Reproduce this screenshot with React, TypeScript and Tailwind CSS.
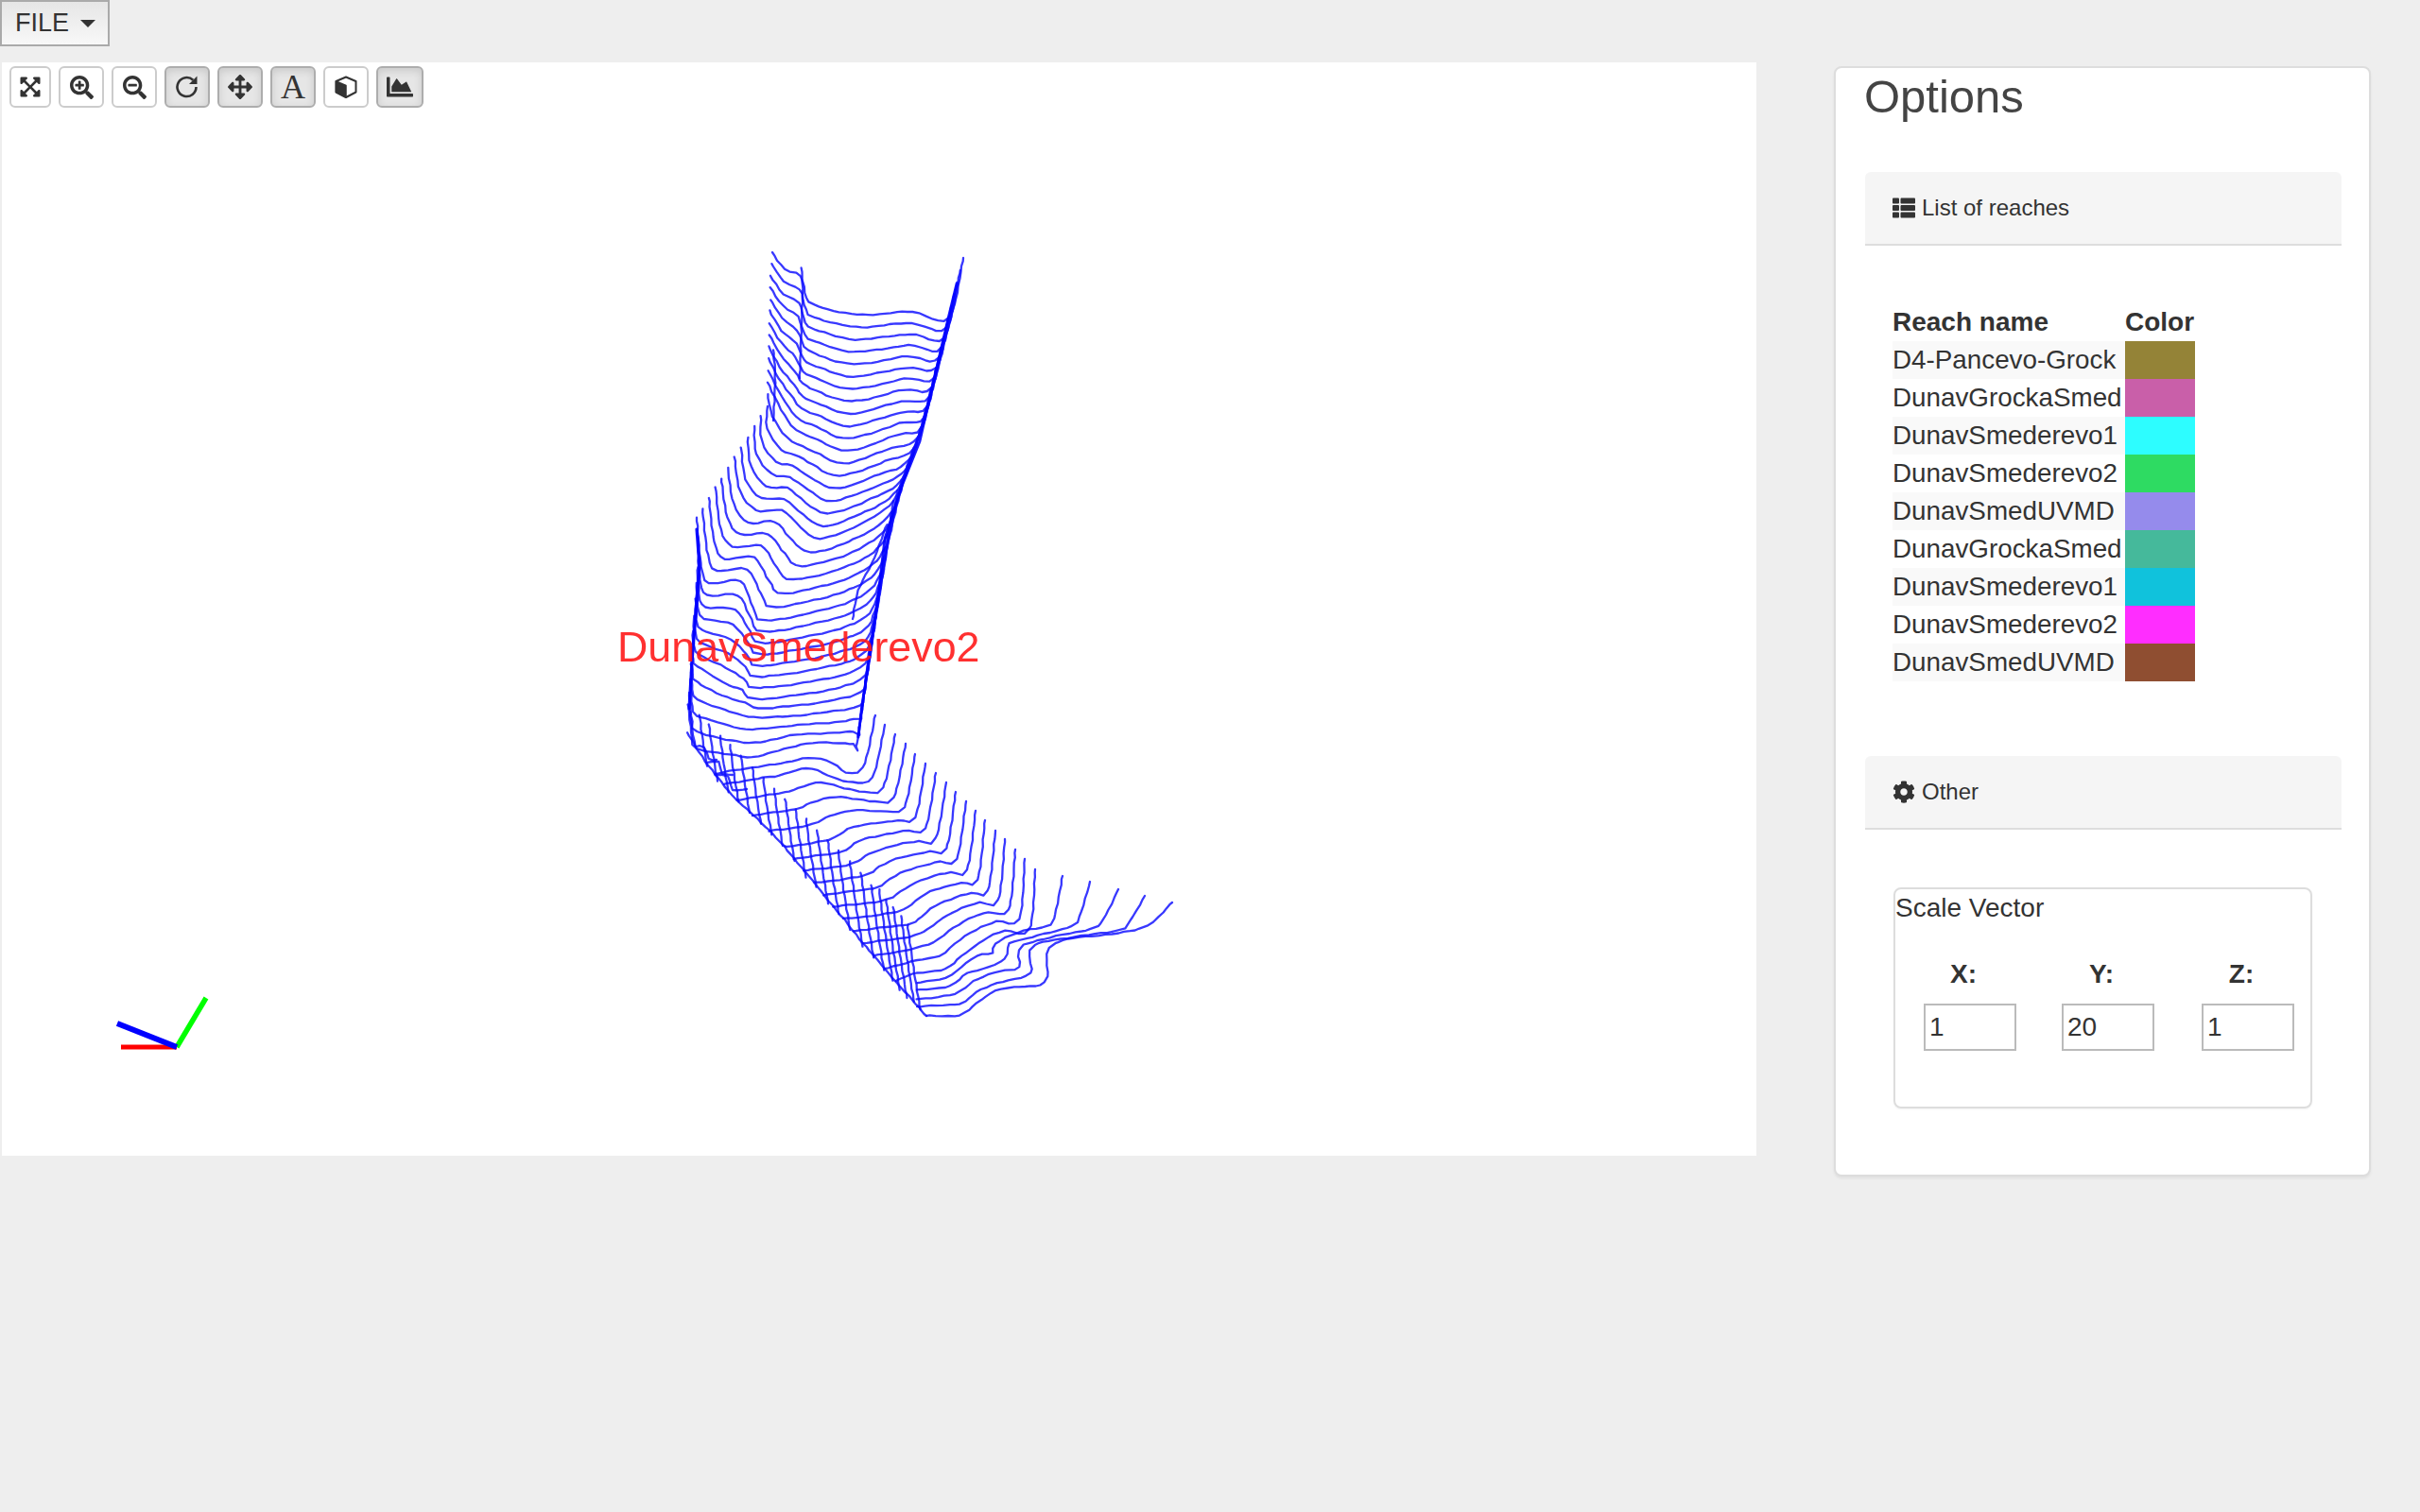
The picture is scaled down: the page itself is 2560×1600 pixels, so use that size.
import React from "react";
import { FaExpandArrowsAlt, FaSearchPlus, FaSearchMinus, FaArrowsAlt, FaChartArea, FaThList, FaCog } from "react-icons/fa";

type P = [number, number];

const lerp = (a: P, b: P, t: number): P => [a[0] + (b[0] - a[0]) * t, a[1] + (b[1] - a[1]) * t];

function interpKeys(keys: Record<number, P[]>, k: number): P[] {
  const ids = Object.keys(keys).map(Number).sort((a, b) => a - b);
  for (let i = 0; i < ids.length - 1; i++) {
    if (k >= ids[i] && k <= ids[i + 1]) {
      const t = (k - ids[i]) / (ids[i + 1] - ids[i]);
      return keys[ids[i]].map((p, n) => lerp(p, keys[ids[i + 1]][n], t));
    }
  }
  return keys[ids[ids.length - 1]];
}

function noisyPath(pts: P[], seed: number): string {
  const out: P[] = [];
  const n = pts.length;
  for (let i = 0; i < n - 1; i++) {
    const p0 = pts[Math.max(i - 1, 0)];
    const p1 = pts[i];
    const p2 = pts[i + 1];
    const p3 = pts[Math.min(i + 2, n - 1)];
    const len = Math.hypot(p2[0] - p1[0], p2[1] - p1[1]);
    const steps = Math.max(2, Math.round(len / 6));
    for (let s = 0; s < steps; s++) {
      const t = s / steps;
      const t2 = t * t;
      const t3 = t2 * t;
      const f = (a: number, b: number, c: number, d: number) =>
        0.5 * (2 * b + (c - a) * t + (2 * a - 5 * b + 4 * c - d) * t2 + (3 * b - a - 3 * c + d) * t3);
      const q = out.length;
      const jx = 0.45 * Math.sin(q * 2.3 + seed * 1.7);
      const jy = 0.7 * Math.sin(q * 1.37 + seed * 2.9) * Math.sin(q * 0.61 + seed);
      out.push([f(p0[0], p1[0], p2[0], p3[0]) + jx, f(p0[1], p1[1], p2[1], p3[1]) + jy]);
    }
  }
  out.push(pts[n - 1]);
  return "M" + out.map((p) => `${p[0].toFixed(1)} ${p[1].toFixed(1)}`).join("L");
}

const leftTips: P[] = [
  [817, 267], [816, 279], [815, 292], [815, 304], [815, 317], [814, 329], [814, 342], [814, 354],
  [813, 367], [813, 379], [813, 392], [812, 405], [812, 417], [812, 430],
  [805, 440], [798, 451], [791, 463], [784, 473], [777, 484], [770, 495], [763, 506], [757, 516], [750, 527], [743, 538], [737, 548],
  [738, 565], [739, 583], [738, 600], [737, 617], [736, 634], [734, 651], [733, 668], [732, 685], [731, 702], [730, 719], [729, 733], [728, 745],
];

const upperKeys: Record<number, P[]> = {
  0: [[817, 267], [830, 285], [847, 292], [853, 315], [862, 323], [907, 333], [965, 330], [1003, 337]],
  11: [[813, 392], [823, 427], [837, 450], [847, 458], [865, 465], [897, 477], [950, 460], [975, 452]],
  18: [[777, 484], [783, 520], [800, 540], [827, 540], [847, 558], [867, 570], [903, 558], [945, 530]],
  24: [[737, 548], [742, 600], [750, 617], [783, 615], [797, 643], [812, 657], [903, 635], [933, 603]],
  31: [[732, 685], [733, 697], [738, 705], [765, 722], [785, 730], [803, 740], [903, 723], [920, 690]],
  36: [[728, 745], [732, 780], [737, 792], [783, 800], [803, 800], [853, 787], [903, 787], [906, 790]],
};

const lowerKeys: Record<number, P[]> = {
  37: [[796, 812], [826, 808], [855, 802], [880, 807], [895, 817], [913, 812]],
  38: [[807, 823], [820, 822], [853, 813], [880, 822], [902, 828], [923, 822]],
  42: [[876, 889], [897, 877], [915, 873], [933, 870], [950, 868], [968, 865]],
  49: [[960, 978], [975, 970], [990, 958], [1010, 950], [1028, 945], [1045, 942]],
  53: [[965, 1031], [1000, 1025], [1017, 1012], [1040, 995], [1063, 985], [1089, 983]],
};

const diagonal: P[] = [[727, 775], [737, 792], [757, 820], [780, 847], [827, 893], [923, 1010], [980, 1075]];

function diagX(y: number): number {
  for (let i = 0; i < diagonal.length - 1; i++) {
    const a = diagonal[i];
    const b = diagonal[i + 1];
    if (y >= a[1] && y <= b[1]) return a[0] + ((b[0] - a[0]) * (y - a[1])) / (b[1] - a[1]);
  }
  return 0;
}

const hatchTipsZ: P[] = [
  [30, -20], [60, -10], [90, 20],
  [125, 55], [157, 85], [192, 120], [228, 155], [262, 190], [297, 225], [332, 255], [365, 290], [398, 320], [433, 355],
  [467, 388], [500, 420], [537, 455], [572, 490], [605, 530], [630, 545], [652, 575], [675, 600], [700, 630], [720, 655],
];
const hatchTips: P[] = hatchTipsZ.map((p) => [720 + p[0] / 3, 760 + p[1] / 3]);

const rightTips: P[] = [
  [926, 757], [936, 767], [947, 777], [958, 787], [968, 798], [979, 808], [990, 818], [1001, 828], [1011, 838],
  [1022, 848], [1032, 858], [1042, 868], [1053, 879], [1063, 888], [1074, 899], [1084, 909], [1095, 920],
];

const finalRows: P[][] = [
  [[970, 1040], [1000, 1035], [1017, 1023], [1033, 1012], [1050, 1008], [1053, 998], [1083, 985], [1107, 980], [1115, 972], [1124, 927]],
  [[970, 1048], [1005, 1043], [1023, 1030], [1040, 1025], [1063, 1015], [1068, 998], [1087, 993], [1133, 980], [1142, 970], [1153, 933]],
  [[970, 1057], [1010, 1052], [1030, 1038], [1057, 1028], [1078, 1023], [1083, 1000], [1153, 983], [1167, 973], [1183, 941]],
  [[970, 1065], [1015, 1062], [1033, 1050], [1055, 1040], [1090, 1030], [1095, 1000], [1180, 985], [1195, 975], [1211, 948]],
  [[980, 1075], [1015, 1074], [1033, 1062], [1053, 1048], [1073, 1045], [1100, 1042], [1108, 1033], [1116, 998], [1205, 983], [1240, 955]],
];

const stairs: P[][] = [
  [[736, 790], [745, 791], [750, 803], [758, 804]],
  [[748, 807], [760, 806], [764, 818], [775, 820]],
  [[757, 820], [770, 821], [775, 836], [790, 835]],
];

function buildPaths(): string[] {
  const paths: string[] = [];
  const elbow = (k: number) => interpKeys(upperKeys, k)[7];
  for (let k = 0; k <= 36; k++) {
    const row = interpKeys(upperKeys, k).map((p) => [p[0], p[1]] as P);
    row[0] = leftTips[k];
    const rtip: P = k >= 5 ? elbow(k - 5) : lerp([1019, 273], elbow(0), k / 5);
    row.push(rtip);
    paths.push(noisyPath(row, k));
  }
  for (let k = 37; k <= 53; k++) {
    const row = interpKeys(lowerKeys, k).map((p) => [p[0], p[1]] as P);
    const y0 = row[0][1] + 7;
    const start: P = [diagX(y0), y0];
    const full: P[] = [start, ...row, rightTips[k - 37]];
    paths.push(noisyPath(full, k));
  }
  finalRows.forEach((r, i) => paths.push(noisyPath(r, 60 + i)));
  hatchTips.forEach((t, j) => {
    const pts: P[] = [t];
    let y = t[1];
    let x = t[0];
    while (y < 1075) {
      y += 6;
      x += 0.15 * 6;
      if (diagX(y) >= x) break;
    }
    pts.push([(t[0] + x) / 2 - 0.5, (t[1] + y) / 2]);
    pts.push([x, y]);
    paths.push(noisyPath(pts, 90 + j));
  });
  stairs.forEach((s, i) => paths.push(noisyPath(s, 130 + i)));
  paths.push(noisyPath(diagonal, 120));
  paths.push(noisyPath([[848, 284], [849, 305], [848, 340], [846, 400]], 121));
  paths.push(noisyPath([[818, 370], [820, 400], [818, 445]], 122));
  paths.push(noisyPath([[938, 555], [925, 590], [908, 625], [902, 655]], 123));
  return paths;
}

const meshPaths = buildPaths();

const reaches: [string, string][] = [
  ["D4-Pancevo-Grock", "bg-[#948337]"],
  ["DunavGrockaSmed", "bg-[#c95fa9]"],
  ["DunavSmederevo1", "bg-[#2dfdff]"],
  ["DunavSmederevo2", "bg-[#2edb62]"],
  ["DunavSmedUVMD", "bg-[#958bec]"],
  ["DunavGrockaSmed", "bg-[#45b99b]"],
  ["DunavSmederevo1", "bg-[#10c2dc]"],
  ["DunavSmederevo2", "bg-[#ff2dff]"],
  ["DunavSmedUVMD", "bg-[#8f4e31]"],
];

function ToolButton({ active, wide, narrow, children }: { active?: boolean; wide?: boolean; narrow?: boolean; children: React.ReactNode }) {
  return (
    <div
      className={
        "flex h-[44px] items-center justify-center rounded-[6px] border-2 text-[#333] " +
        (narrow ? "w-[44px] " : wide ? "w-[50px] " : "w-[48px] ") +
        (active
          ? "border-[#adadad] bg-[#e6e6e6] shadow-[inset_0_3px_8px_rgba(0,0,0,0.125)]"
          : "border-[#ccc] bg-white")
      }
    >
      {children}
    </div>
  );
}

function SectionHeader({ icon, title }: { icon: React.ReactNode; title: string }) {
  return (
    <div className="flex h-[78px] items-center gap-[7px] rounded-t-[6px] border-b-2 border-[#ddd] bg-[#f5f5f5] pl-[29px] text-[24px] text-[#333]">
      {icon}
      <span>{title}</span>
    </div>
  );
}

function VectorField({ label, value, width }: { label: string; value: string; width: string }) {
  return (
    <div className={width}>
      <div className="w-[84px] text-center text-[28px] leading-[40px] font-bold">{label}</div>
      <input
        readOnly
        value={value}
        className="mt-[11px] block h-[50px] w-[98px] border-2 border-[#bbb] bg-white pl-[4px] text-[28px] text-[#333] outline-none"
      />
    </div>
  );
}

export default function App() {
  return (
    <div className="min-h-[1600px] w-[2560px] overflow-hidden bg-[#eeeeee] font-['Liberation_Sans',Arial,sans-serif] text-[#333]">
      <button className="flex h-[49px] w-[116px] items-center border-2 border-[#aaa] bg-linear-to-b from-[#e6e6e6] to-[#f8f8f8] pl-[14px] text-[27px] text-[#333]">
        <span>FILE</span>
        <span className="ml-[12px] h-0 w-0 border-x-[8px] border-t-[8px] border-x-transparent border-t-[#333]" />
      </button>

      <div className="mt-[17px] flex items-start pl-[2px]">
        <div className="relative h-[1157px] w-[1856px] bg-white">
          <svg className="absolute inset-0 h-full w-full blur-[0.5px]" viewBox="2 66 1856 1157">
            <g fill="none" stroke="#0c0cff" strokeWidth="2.3" strokeOpacity="0.82" strokeLinejoin="round" strokeLinecap="round">
              {meshPaths.map((d, i) => (
                <path key={i} d={d} />
              ))}
            </g>
            <g fill="none" stroke="#0000ff" strokeLinejoin="round" strokeLinecap="round" strokeOpacity="0.9">
              <path d="M1012 300L1003 337L986 410L973 467L953 517" strokeWidth="2.8" />
              <path d="M953 517L936 570L929 630L921 690L912 745L908 780" strokeWidth="2.8" />
              <path d="M737 560L740 600L736 650L732 700L729 750" strokeWidth="3.2" />
            </g>
            <text x="653" y="700" fontSize="44.8" fill="#ff1a1a" fillOpacity="0.9">
              DunavSmederevo2
            </text>
            <g fill="none" strokeLinecap="butt">
              <line x1="128" y1="1108" x2="187" y2="1108" stroke="#ff0000" strokeWidth="5" />
              <line x1="218" y1="1056" x2="187" y2="1108" stroke="#00ff00" strokeWidth="5.5" />
              <line x1="124" y1="1083" x2="187" y2="1108" stroke="#0000ff" strokeWidth="6" />
            </g>
          </svg>
          <div className="absolute top-[4px] left-[8px] flex gap-[8px]">
            <ToolButton narrow>
              <FaExpandArrowsAlt size={24} />
            </ToolButton>
            <ToolButton>
              <FaSearchPlus size={25} />
            </ToolButton>
            <ToolButton>
              <FaSearchMinus size={25} />
            </ToolButton>
            <ToolButton active>
              <svg width="26" height="26" viewBox="0 0 26 26" fill="none">
                <path d="M22.5 13a10 10 0 1 1-3.2-7.3" stroke="#333" strokeWidth="2.6" />
                <path d="M23.5 1.5v8.5h-8.5z" fill="#333" />
              </svg>
            </ToolButton>
            <ToolButton active>
              <FaArrowsAlt size={26} />
            </ToolButton>
            <ToolButton active>
              <span className="font-['Liberation_Serif',serif] text-[36px] leading-none">A</span>
            </ToolButton>
            <ToolButton>
              <svg width="24" height="24" viewBox="0 0 24 24">
                <path d="M12 1.5L22.5 6V17.5L12 23L1.5 17.5V6Z" fill="#fff" stroke="#333" strokeWidth="2" strokeLinejoin="round" />
                <path d="M1.5 6L12 10.5V23L1.5 17.5Z" fill="#333" stroke="#333" strokeWidth="1.5" strokeLinejoin="round" />
              </svg>
            </ToolButton>
            <ToolButton active wide>
              <FaChartArea size={28} />
            </ToolButton>
          </div>
        </div>

        <div className="mt-[4px] ml-[82px] h-[1175px] w-[568px] rounded-[8px] border-2 border-[#ddd] bg-white pr-[29px] pl-[31px] shadow-[0_2px_3px_rgba(0,0,0,0.06)]">
          <div className="-ml-[1px] h-[110px] pt-[4px] text-[49px] leading-[53px] text-[#444]">Options</div>

          <SectionHeader icon={<FaThList size={24} />} title="List of reaches" />

          <div className="mt-[61px] ml-[29px] grid grid-cols-[246px_74px] text-[28px] leading-[40px]">
            <div className="font-bold">Reach name</div>
            <div className="font-bold">Color</div>
            {reaches.map(([name, color], i) => (
              <React.Fragment key={i}>
                <div className={"h-[40px] overflow-hidden whitespace-nowrap text-[27.8px] " + (i % 2 === 0 ? "bg-[#f9f9f9]" : "bg-white")}>{name}</div>
                <div className={"h-[40px] " + color} />
              </React.Fragment>
            ))}
          </div>

          <div className="mt-[79px]">
            <SectionHeader icon={<FaCog size={24} />} title="Other" />
          </div>

          <div className="mt-[61px] ml-[30px] h-[234px] w-[443px] rounded-[8px] border-2 border-[#ddd] shadow-[0_1px_2px_rgba(0,0,0,0.05)]">
            <div className="text-[28px] leading-[40px]">Scale Vector</div>
            <div className="mt-[30px] flex pl-[30px]">
              <VectorField label="X:" value="1" width="w-[146px]" />
              <VectorField label="Y:" value="20" width="w-[148px]" />
              <VectorField label="Z:" value="1" width="w-[98px]" />
            </div>
          </div>
        </div>
      </div>
    </div>
  );
}
